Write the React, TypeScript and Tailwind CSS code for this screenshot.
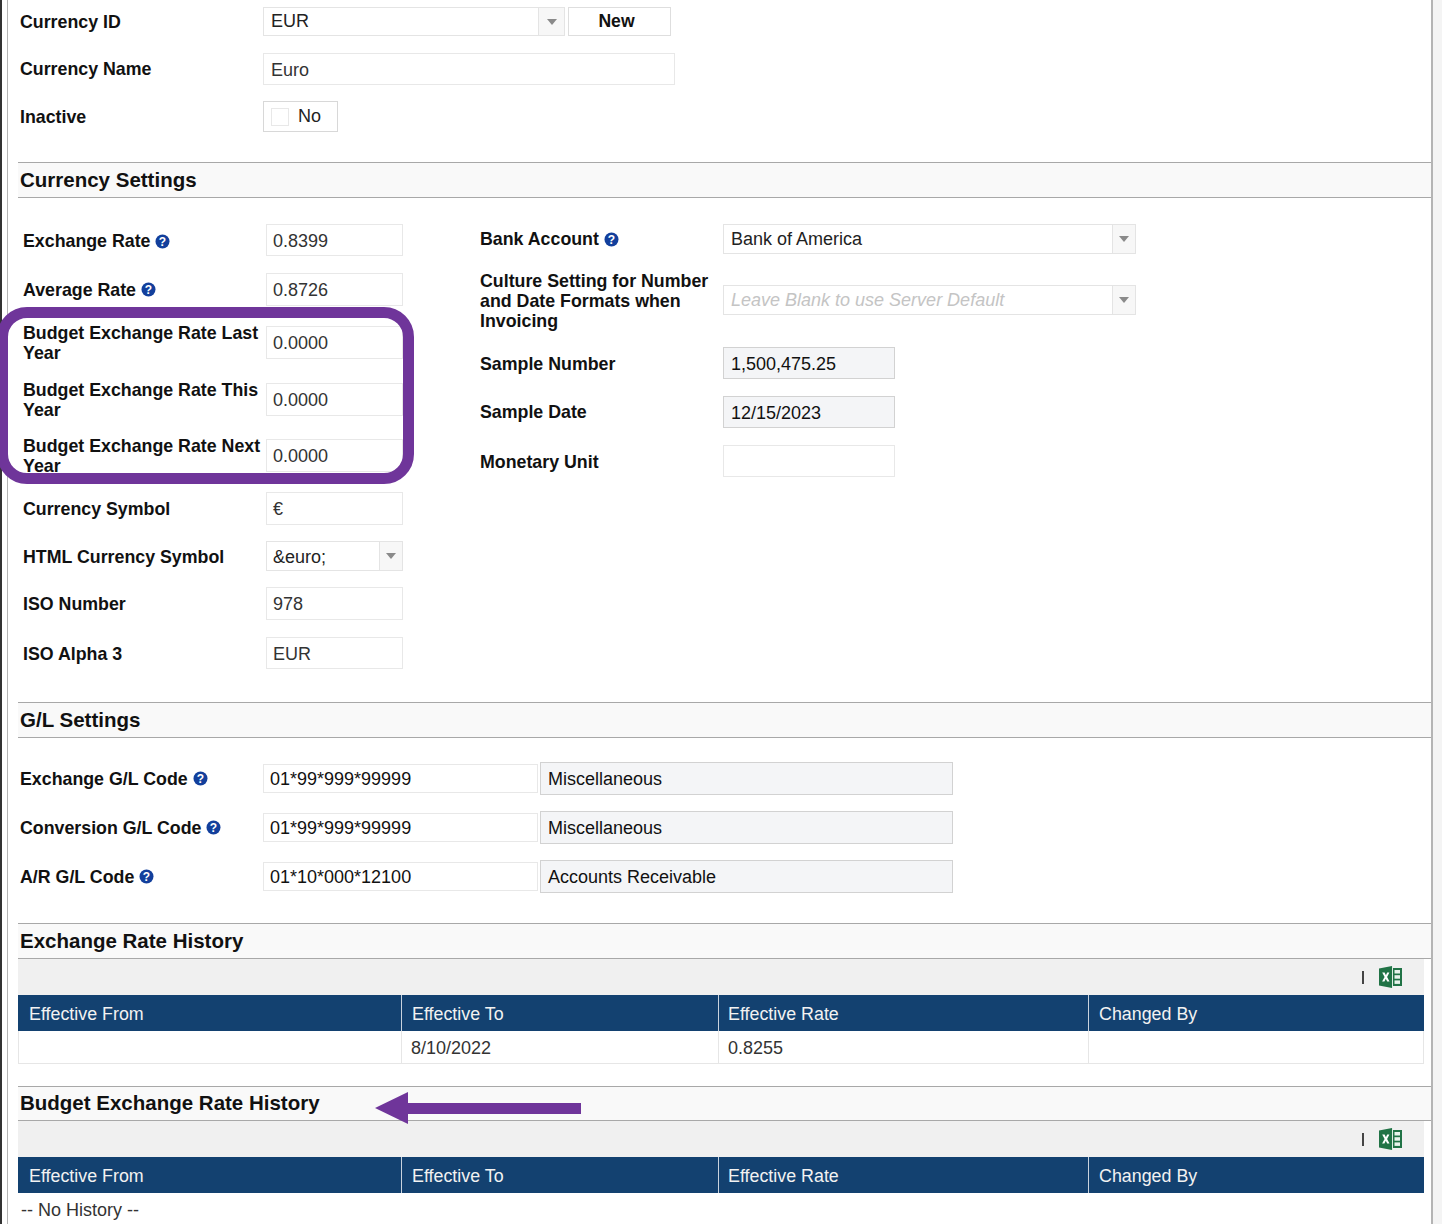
const inputBox = "flex items-center border border-[#e8e8e8] bg-white pl-[7px] pt-[2px] text-[18px] text-[#333]";
const narrowInput = "flex h-full w-[137px] items-center border border-[#e8e8e8] bg-white pl-[6px] pt-[2px] text-[18px] text-[#333]";
const readOnlyBox = "flex items-center border border-[#d2d2d2] bg-[#f4f5f7] pl-[7px] pt-[2px] text-[18px] text-[#111]";
const labelText = "text-[17.8px] font-bold leading-[20px] text-[#111]";

function HelpIcon() {
  return (
    <svg width="15" height="15" viewBox="0 0 15 15" className="ml-[5px] shrink-0">
      <circle cx="7.5" cy="7.5" r="7" fill="#123f9c" />
      <text x="7.5" y="11.7" textAnchor="middle" fontSize="12" fontWeight="700" fill="#fff" fontFamily="Liberation Sans, sans-serif">?</text>
    </svg>
  );
}

function Caret() {
  return <div className="h-0 w-0 border-x-[5px] border-t-[6px] border-x-transparent border-t-[#8a8a8a]" />;
}

function ExcelIcon() {
  return (
    <svg width="23" height="22" viewBox="0 0 23 22" className="ml-[15px]">
      <rect x="12" y="2" width="11" height="18" fill="#217346" />
      <rect x="15.5" y="4" width="5.5" height="3.5" fill="#e8f3ec" />
      <rect x="15.5" y="9.2" width="5.5" height="3.5" fill="#e8f3ec" />
      <rect x="15.5" y="14.4" width="5.5" height="3.5" fill="#e8f3ec" />
      <path d="M0 2.5L13 0V22L0 19.5Z" fill="#217346" />
      <path d="M13 0H14V22H13Z" fill="#dfeee5" />
      <path d="M3.2 6.5H5.6L6.9 9.3L8.2 6.5H10.4L8.1 11L10.5 15.5H8.2L6.8 12.7L5.4 15.5H3.1L5.6 11Z" fill="#fff" />
    </svg>
  );
}

function SectionHeader({ title, className }: { title: string; className: string }) {
  return (
    <div className={`flex items-center border-y border-[#a8a8a8] bg-[#f9f9f9] pl-[2px] text-[20.5px] font-bold text-[#111] ${className}`}>
      {title}
    </div>
  );
}

function Row({ label, help, labelWidth, className, children }: { label: string; help?: boolean; labelWidth: string; className: string; children: React.ReactNode }) {
  return (
    <div className={`flex items-center ${className}`}>
      <div className={`flex items-center ${labelWidth} ${labelText}`}>
        <span>{label}</span>
        {help && <HelpIcon />}
      </div>
      {children}
    </div>
  );
}

function SelectBox({ value, placeholder, className, buttonWidth = "w-[23px]", textClass = "pl-[7px]" }: { value: string; placeholder?: boolean; className: string; buttonWidth?: string; textClass?: string }) {
  return (
    <div className={`flex h-full border border-[#e4e4e4] bg-white ${className}`}>
      <div className={`flex flex-1 items-center text-[18px] ${textClass} ${placeholder ? "italic text-[#c4c4c4]" : "text-[#222]"}`}>{value}</div>
      <div className={`flex ${buttonWidth} items-center justify-center border-l border-[#e4e4e4] bg-[#f7f7f7]`}>
        <Caret />
      </div>
    </div>
  );
}

function HistoryTable({ children }: { children: React.ReactNode }) {
  return (
    <div className="w-[1406px]">
      <div className="flex h-[36px] items-center justify-end bg-[#f0f0f0] pr-[22px]">
        <div className="h-[13px] w-[2px] bg-[#444]" />
        <ExcelIcon />
      </div>
      <div className="grid h-[36px] grid-cols-[383px_317px_370px_1fr] bg-[#134170] text-[17.85px] text-[#f2f2f2]">
        <div className="flex items-center pl-[11px] pt-[2px]">Effective From</div>
        <div className="flex items-center border-l border-[#c9d3de] pl-[10px] pt-[2px]">Effective To</div>
        <div className="flex items-center border-l border-[#c9d3de] pl-[9px] pt-[2px]">Effective Rate</div>
        <div className="flex items-center border-l border-[#c9d3de] pl-[10px] pt-[2px]">Changed By</div>
      </div>
      {children}
    </div>
  );
}

const glRows = [
  { label: "Exchange G/L Code", code: "01*99*999*99999", name: "Miscellaneous", mt: "mt-[24px]" },
  { label: "Conversion G/L Code", code: "01*99*999*99999", name: "Miscellaneous", mt: "mt-[16px]" },
  { label: "A/R G/L Code", code: "01*10*000*12100", name: "Accounts Receivable", mt: "mt-[16px]" },
];

export default function App() {
  return (
    <div className="relative flex h-[1224px] w-[1442px] overflow-hidden bg-white font-['Liberation_Sans',Arial,sans-serif]">
      <div className="h-full w-[2px] bg-[#333]" />
      <div className="ml-[5px] h-full w-[1426px] border-l border-r-2 border-l-[#b4b4b4] border-r-[#b4b4b4] pl-[10px]">
        {/* currency header fields */}
        <div className="pl-[2px]">
          <Row label="Currency ID" labelWidth="w-[243px]" className="mt-[7px] h-[29px]">
            <SelectBox value="EUR" className="w-[302px]" buttonWidth="w-[26px]" />
            <div className="ml-[3px] flex h-full w-[103px] items-center justify-center border border-[#dedede] pr-[6px] text-[17.6px] font-bold text-[#111]">New</div>
          </Row>
          <Row label="Currency Name" labelWidth="w-[243px]" className="mt-[17px] h-[32px]">
            <div className={`${inputBox} h-full w-[412px]`}>Euro</div>
          </Row>
          <Row label="Inactive" labelWidth="w-[243px]" className="mt-[16px] h-[31px]">
            <div className="flex h-full w-[75px] items-center border border-[#d8d8d8] pl-[7px] text-[18px] text-[#222]">
              <div className="h-[18px] w-[18px] border border-[#e8e8e8]" />
              <span className="ml-[9px]">No</span>
            </div>
          </Row>
        </div>

        <SectionHeader title="Currency Settings" className="mt-[30px] h-[36px]" />
        <div className="mt-[26px] flex h-[478px] pl-[5px]">
          <div className="w-[380px]">
            <Row label="Exchange Rate" help labelWidth="w-[243px] pt-[2px]" className="h-[32px]">
              <div className={narrowInput}>0.8399</div>
            </Row>
            <Row label="Average Rate" help labelWidth="w-[243px]" className="mt-[17px] h-[33px]">
              <div className={narrowInput}>0.8726</div>
            </Row>
            <Row label="Budget Exchange Rate Last Year" labelWidth="w-[243px]" className="mt-[20px] h-[33px]">
              <div className={narrowInput}>0.0000</div>
            </Row>
            <Row label="Budget Exchange Rate This Year" labelWidth="w-[243px]" className="mt-[24px] h-[33px]">
              <div className={narrowInput}>0.0000</div>
            </Row>
            <Row label="Budget Exchange Rate Next Year" labelWidth="w-[243px]" className="mt-[23px] h-[33px]">
              <div className={narrowInput}>0.0000</div>
            </Row>
            <Row label="Currency Symbol" labelWidth="w-[243px]" className="mt-[20px] h-[33px]">
              <div className={narrowInput}>€</div>
            </Row>
            <Row label="HTML Currency Symbol" labelWidth="w-[243px] pt-[2px]" className="mt-[16px] h-[30px]">
              <SelectBox value="&amp;euro;" className="w-[137px]" textClass="pl-[6px] pt-[2px]" />
            </Row>
            <Row label="ISO Number" labelWidth="w-[243px]" className="mt-[16px] h-[33px]">
              <div className={narrowInput}>978</div>
            </Row>
            <Row label="ISO Alpha 3" labelWidth="w-[243px] pt-[2px]" className="mt-[17px] h-[32px]">
              <div className={narrowInput}>EUR</div>
            </Row>
          </div>
          <div className="ml-[77px]">
            <Row label="Bank Account" help labelWidth="w-[243px]" className="h-[30px]">
              <SelectBox value="Bank of America" className="w-[413px]" />
            </Row>
            <Row label="Culture Setting for Number and Date Formats when Invoicing" labelWidth="w-[243px] pr-[10px] pt-[1px]" className="mt-[31px] h-[30px]">
              <SelectBox value="Leave Blank to use Server Default" placeholder className="w-[413px]" />
            </Row>
            <Row label="Sample Number" labelWidth="w-[243px] pt-[1px]" className="mt-[32px] h-[32px]">
              <div className={`${readOnlyBox} h-full w-[172px]`}>1,500,475.25</div>
            </Row>
            <Row label="Sample Date" labelWidth="w-[243px]" className="mt-[17px] h-[32px]">
              <div className={`${readOnlyBox} h-full w-[172px]`}>12/15/2023</div>
            </Row>
            <Row label="Monetary Unit" labelWidth="w-[243px] pt-[1px]" className="mt-[17px] h-[32px]">
              <div className={`${inputBox} h-full w-[172px]`} />
            </Row>
          </div>
        </div>

        <SectionHeader title="G/L Settings" className="h-[36px]" />
        <div className="pl-[2px]">
          {glRows.map((r) => (
            <Row key={r.label} label={r.label} help labelWidth="w-[243px]" className={`${r.mt} h-[33px]`}>
              <div className="flex h-[29px] w-[275px] items-center border border-[#e8e8e8] bg-white pl-[6px] pt-[2px] text-[18px] text-[#111]">{r.code}</div>
              <div className={`${readOnlyBox} ml-[2px] h-full w-[413px]`}>{r.name}</div>
            </Row>
          ))}
        </div>

        <SectionHeader title="Exchange Rate History" className="mt-[30px] h-[36px]" />
        <HistoryTable>
          <div className="grid h-[33px] grid-cols-[382px_317px_370px_1fr] border-x border-b border-[#e6e6e6] text-[18px] text-[#333]">
            <div />
            <div className="flex items-center border-l border-[#e6e6e6] pl-[9px] pt-[3px]">8/10/2022</div>
            <div className="flex items-center border-l border-[#e6e6e6] pl-[9px] pt-[3px]">0.8255</div>
            <div className="border-l border-[#e6e6e6]" />
          </div>
        </HistoryTable>

        <SectionHeader title="Budget Exchange Rate History" className="mt-[22px] h-[35px]" />
        <HistoryTable>
          <div className="flex h-[35px] items-center pl-[3px] text-[18px] text-[#333]">-- No History --</div>
        </HistoryTable>
      </div>
      <div className="h-full flex-1 bg-[#f4f4f4]" />

      {/* purple annotations */}
      <div className="absolute left-[-3px] top-[307px] h-[177px] w-[417px] rounded-[30px] border-[11px] border-[#6f359a]" />
      <svg width="206" height="32" viewBox="0 0 206 32" className="absolute left-[375px] top-[1092px]">
        <path d="M0 16L33 0V11H206V22H33V32Z" fill="#6f359a" />
      </svg>
    </div>
  );
}
